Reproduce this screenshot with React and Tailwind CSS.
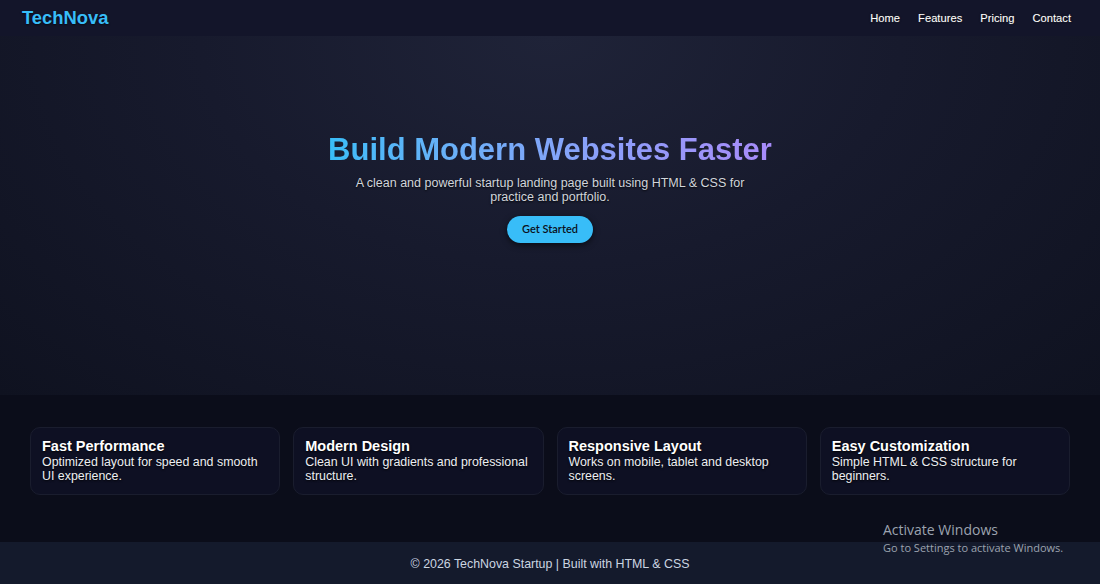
import React from "react";

const features = [
  { t: "Fast Performance", d: "Optimized layout for speed and smooth UI experience." },
  { t: "Modern Design", d: "Clean UI with gradients and professional structure." },
  { t: "Responsive Layout", d: "Works on mobile, tablet and desktop screens." },
  { t: "Easy Customization", d: "Simple HTML & CSS structure for beginners." },
];

export default function App() {
  return (
    <div className="relative w-[1100px] h-[584px] overflow-hidden bg-[#0b0d1a] flex flex-col font-['Liberation_Sans',Arial,sans-serif]">
      <nav className="h-[36px] shrink-0 bg-[#13152a] flex items-center justify-between pl-[22px] pr-[29px]">
        <div className="text-[#38bdf8] font-bold text-[18.4px] [text-shadow:0_1px_2px_rgba(0,0,0,0.6)]">TechNova</div>
        <div className="flex gap-[18px] text-white text-[11.2px] pt-[1px] [text-shadow:0_0_2px_rgba(0,0,0,0.9),0_0_1px_rgba(255,255,255,0.4)]">
          <span>Home</span>
          <span>Features</span>
          <span>Pricing</span>
          <span>Contact</span>
        </div>
      </nav>
      <section className="h-[359px] shrink-0 flex flex-col items-center pt-[96px] bg-[radial-gradient(ellipse_at_50%_0%,#1f2338_0%,#171a2d_45%,#0f1220_100%)]">
        <h1 className="text-[31px] font-bold leading-[36px] bg-gradient-to-r from-[#38bdf8] to-[#a78bfa] bg-clip-text text-transparent">
          Build Modern Websites Faster
        </h1>
        <p className="mt-[8px] w-[400px] text-center text-[12.5px] leading-[14px] text-[#d1d5db] [text-shadow:0_1px_2px_rgba(0,0,0,0.8)]">
          A clean and powerful startup landing page built using HTML &amp; CSS for practice and portfolio.
        </p>
        <button className="mt-[12px] h-[27px] px-[15px] rounded-full bg-[#38bdf8] text-[#0b1020] text-[11px] font-semibold font-['Lato',sans-serif] shadow-[0_2px_6px_rgba(0,0,0,0.6)]">
          Get Started
        </button>
      </section>
      <section className="flex-1 grid grid-cols-4 gap-[13px] px-[30px] pt-[32px] pb-[47px]">
        {features.map((f) => (
          <div key={f.t} className="rounded-[10px] bg-[#11132a]/60 border border-[#1a1d2e] px-[11px] pt-[10px]">
            <h3 className="text-white font-bold text-[14.5px] leading-[17px] [text-shadow:0_1px_2px_rgba(0,0,0,0.9)]">{f.t}</h3>
            <p className="text-[#eceef2] text-[12.4px] leading-[14px] [text-shadow:0_1px_2px_rgba(0,0,0,0.9)]">{f.d}</p>
          </div>
        ))}
      </section>
      <footer className="h-[42px] shrink-0 bg-[#141a2c] flex items-center justify-center text-[12.4px] text-[#cbd5e1] pt-[2px]">
        © 2026 TechNova Startup | Built with HTML &amp; CSS
      </footer>
      <div className="absolute left-[883px] top-[521px] text-[#9ca3af] font-['Open_Sans',sans-serif] pointer-events-none">
        <div className="text-[14px] leading-[18px]">Activate Windows</div>
        <div className="text-[11px] leading-[14px] mt-[2px]">Go to Settings to activate Windows.</div>
      </div>
    </div>
  );
}
